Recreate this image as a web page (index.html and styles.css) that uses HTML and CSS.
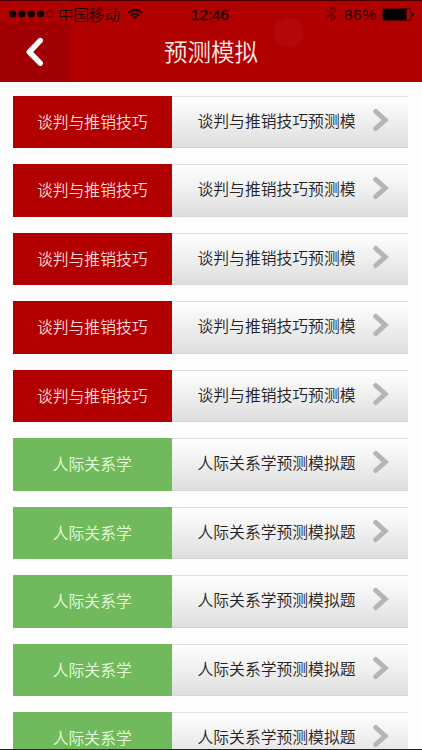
FILE: index.html
```
<!DOCTYPE html>
<html lang="zh-CN">
<head>
  <meta charset="UTF-8">
  <meta name="viewport" content="width=device-width, initial-scale=1">
  <title>预测模拟</title>
  <link rel="stylesheet" href="styles.css">
</head>
<body>
  <div class="screen">
    <header class="header">
      <div class="status-bar">
        <svg class="signal" width="46" height="10" viewBox="0 0 46 10">
          <circle cx="3.7" cy="5" r="3.6"/>
          <circle cx="13" cy="5" r="3.6"/>
          <circle cx="22.3" cy="5" r="3.6"/>
          <circle cx="31.6" cy="5" r="3.6"/>
          <circle class="off" cx="40.8" cy="5" r="3.2"/>
        </svg>
        <span class="carrier">中国移动</span>
        <svg class="wifi" width="16" height="12" viewBox="0 0 16 12">
          <path d="M1.2 4.7Q8 -1.3 14.8 4.7M3.8 7.5Q8 3.7 12.2 7.5"/>
          <path class="dot" d="M5.6 9Q8 7.2 10.4 9L8 11.5Z"/>
        </svg>
        <span class="time">12:46</span>
        <svg class="bluetooth" width="11" height="16" viewBox="0 0 11 16">
          <path d="M.8 4.3L9.5 11.5L5.3 15V1L9.5 4.5L.8 11.8"/>
        </svg>
        <span class="battery-text">86%</span>
        <svg class="battery" width="32" height="13" viewBox="0 0 32 13">
          <rect class="frame" x=".5" y=".5" width="28.5" height="12" rx="1"/>
          <rect x="1" y="1" width="23.5" height="11"/>
          <path d="M30 4.5Q31.8 5 31.8 6.5T30 8.5Z"/>
        </svg>
      </div>
      <div class="nav">
        <a class="back" href="#">
          <svg width="20" height="30" viewBox="0 0 20 30">
            <path d="M15.2 3.6L4.3 15L15.2 26.2"/>
          </svg>
        </a>
        <h1>预测模拟</h1>
      </div>
      <span class="touch"></span>
    </header>

    <ul class="list" id="list"></ul>
  </div>

  <script>
    const items = [];
    for (let i = 0; i < 5; i++) {
      items.push({ type: 'red', name: '谈判与推销技巧', title: '谈判与推销技巧预测模' });
    }
    for (let i = 0; i < 5; i++) {
      items.push({ type: 'green', name: '人际关系学', title: '人际关系学预测模拟题' });
    }

    const list = document.getElementById('list');
    items.forEach(item => {
      const row = document.createElement('li');
      row.className = 'row';
      row.innerHTML = `
        <span class="label ${item.type}">${item.name}</span>
        <span class="title">${item.title}</span>
        <svg class="arrow" width="18" height="24" viewBox="0 0 18 24">
          <path d="M3.8 3.5L13.2 12L3.8 20.5"/>
        </svg>`;
      list.appendChild(row);
    });
  </script>
</body>
</html>
```
FILE: styles.css
```
* {
  box-sizing: border-box;
}
body {
  margin: 0;
  background: #fefefe;
  font-family: "Liberation Sans", "Noto Sans CJK SC", sans-serif;
  font-weight: 350;
}
.screen {
  height: 750px;
  overflow: hidden;
  border-bottom: 1px solid #222;
}
.header {
  position: relative;
  height: 82px;
  background: #b00000;
  border-top: 1px solid #4a0000;
}

/* status bar */
.status-bar {
  display: flex;
  align-items: center;
  height: 20px;
  padding: 6px 8px 0 9px;
  line-height: 16px;
  color: #240000;
}
.status-bar svg {
  flex: none;
}
.signal {
  fill: #0c0000;
}
.signal .off {
  fill: none;
  stroke: #650000;
}
.carrier {
  width: 66px;
  margin-left: 3px;
  padding-top: 3px;
  font-size: 15.5px;
  white-space: nowrap;
}
.wifi {
  margin-left: 3px;
  fill: none;
  stroke: #210000;
  stroke-width: 2;
}
.wifi .dot {
  fill: #210000;
  stroke: none;
}
.time {
  width: 40px;
  margin-left: 48px;
  padding-top: 2px;
  font-size: 15.2px;
  -webkit-text-stroke: 0.3px #240000;
}
.time,
.battery-text {
  white-space: nowrap;
}
.bluetooth {
  margin-left: 95px;
  fill: none;
  stroke: #6c0000;
  stroke-width: 1.3;
}
.battery-text {
  width: 34px;
  margin-left: 7px;
  padding-top: 2px;
  font-size: 15.5px;
  letter-spacing: 0.5px;
}
.battery {
  margin-left: 4px;
  fill: #000;
}
.battery .frame {
  fill: none;
  stroke: #5c0000;
}

/* navigation */
.nav {
  display: grid;
  grid-template-columns: 70px 1fr 70px;
  grid-template-rows: 61px;
}
.back {
  display: flex;
  align-items: center;
  padding-left: 25px;
  background: #a00004;
}
.back path {
  fill: none;
  stroke: #fff;
  stroke-width: 5.5;
  stroke-linecap: round;
  stroke-linejoin: round;
}
.nav h1 {
  margin: 0;
  font-size: 23.5px;
  font-weight: 350;
  line-height: 64px;
  text-align: center;
  color: #ffeaea;
}
.touch {
  position: absolute;
  top: 17px;
  left: 274px;
  width: 29px;
  height: 29px;
  border-radius: 50%;
  background: #b4070b;
  box-shadow: 0 0 5px 2px rgba(190, 20, 20, 0.15);
}

/* list */
.list {
  display: flex;
  flex-direction: column;
  gap: 16px;
  margin: 0;
  padding: 14px 14px 0 13px;
  list-style: none;
}
.row {
  display: flex;
  height: 52.45px;
  font-size: 15.8px;
  background: linear-gradient(#fff, #dedede);
  border-top: 1px solid #e0e0e0;
  border-bottom: 1px solid #d5d5d5;
}
.label {
  width: 158.5px;
  margin: -1px 0;
  line-height: 54px;
  text-align: center;
  color: #ffdada;
}
.red {
  background: #b20000;
}
.green {
  background: #70b95c;
  color: #e7ffdf;
}
.title {
  width: 160px;
  margin-left: 26px;
  line-height: 50px;
  white-space: nowrap;
  color: #222;
}
.arrow {
  margin: 11px 0 0 14px;
  fill: none;
  stroke: #b5b5b5;
  stroke-width: 5;
  stroke-linecap: round;
}
```
